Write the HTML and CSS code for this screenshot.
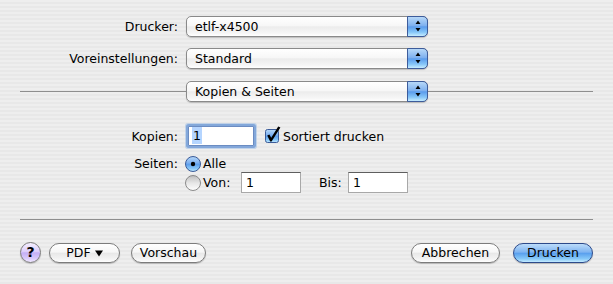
FILE: index.html
```html
<!DOCTYPE html>
<html>
<head>
<meta charset="utf-8">
<link rel="stylesheet" href="styles.css">
</head>
<body>
<svg width="0" height="0" class="defs">
  <defs>
    <linearGradient id="aqua" x1="0" y1="0" x2="0" y2="1">
      <stop offset="0" stop-color="#b7d8f8"/>
      <stop offset="0.45" stop-color="#79aef0"/>
      <stop offset="0.5" stop-color="#5a9cec"/>
      <stop offset="0.8" stop-color="#86c6f8"/>
      <stop offset="1" stop-color="#c6ecff"/>
    </linearGradient>
    <linearGradient id="grayr" x1="0" y1="0" x2="0" y2="1">
      <stop offset="0" stop-color="#bdbdbd"/>
      <stop offset="0.5" stop-color="#e6e6e6"/>
      <stop offset="1" stop-color="#ffffff"/>
    </linearGradient>
  </defs>
</svg>
<div class="dialog">
  <div class="row">
    <span class="lbl">Drucker:</span>
    <div class="popup"><span class="ptext">etlf-x4500</span><span class="parrows"><svg width="19" height="19" viewBox="0 0 19 19"><path d="M7.5 7 L12.5 7 L10 3.5 Z M7.5 11 L12.5 11 L10 14.5 Z" fill="#000"/></svg></span></div>
  </div>
  <div class="row">
    <span class="lbl">Voreinstellungen:</span>
    <div class="popup"><span class="ptext">Standard</span><span class="parrows"><svg width="19" height="19" viewBox="0 0 19 19"><path d="M7.5 7 L12.5 7 L10 3.5 Z M7.5 11 L12.5 11 L10 14.5 Z" fill="#000"/></svg></span></div>
  </div>
  <div class="seprow">
    <div class="popup"><span class="ptext">Kopien &amp; Seiten</span><span class="parrows"><svg width="19" height="19" viewBox="0 0 19 19"><path d="M7.5 7 L12.5 7 L10 3.5 Z M7.5 11 L12.5 11 L10 14.5 Z" fill="#000"/></svg></span></div>
  </div>

  <div class="pane">
    <div class="row kopien">
      <span class="lbl">Kopien:</span>
      <div class="field focus"><span class="sel">1</span></div>
      <svg class="check" width="18" height="18" viewBox="0 0 18 18">
        <rect x="0.5" y="3.5" width="13" height="13" rx="2" fill="url(#aqua)" stroke="#3b5b98"/>
        <path d="M2.2 9.6 L4.4 8.4 L6.2 11.8 L13.2 0.6 L15.4 1.4 L6.6 15.6 L5.2 15.6 Z" fill="#000"/>
      </svg>
      <span class="cbtext">Sortiert drucken</span>
    </div>
    <div class="row seiten">
      <span class="lbl">Seiten:</span>
      <div class="radios">
        <div class="ropt alle">
          <svg width="16" height="16" viewBox="0 0 16 16"><circle cx="8" cy="8" r="7.5" fill="url(#aqua)" stroke="#3b5b98"/><circle cx="8" cy="8" r="2.2" fill="#000"/></svg>
          <span class="rtext">Alle</span>
        </div>
        <div class="ropt von">
          <svg width="16" height="16" viewBox="0 0 16 16"><circle cx="8" cy="8" r="7.5" fill="url(#grayr)" stroke="#8a8a8a"/></svg>
          <span class="rtext vontext">Von:</span>
          <div class="field small">1</div>
          <span class="bistext">Bis:</span>
          <div class="field small">1</div>
        </div>
      </div>
    </div>
  </div>

  <div class="sep"></div>

  <div class="buttons">
    <div class="help">?</div>
    <div class="btn pdf">PDF <svg width="8" height="7" viewBox="0 0 8 7"><path d="M0 0.5 L8 0.5 L4 6.5 Z" fill="#000"/></svg></div>
    <div class="btn vorschau">Vorschau</div>
    <div class="spacer"></div>
    <div class="btn abbrechen">Abbrechen</div>
    <div class="btn default drucken">Drucken</div>
  </div>
</div>
</body>
</html>
```

FILE: styles.css
```css
* { box-sizing: border-box; }
html, body { margin: 0; padding: 0; }
body {
  width: 613px;
  height: 284px;
  overflow: hidden;
  font-family: "DejaVu Sans", sans-serif;
  font-size: 12.5px;
  color: #000;
  background: repeating-linear-gradient(to bottom, #eeeeee 0, #eeeeee 2px, #e8e8e8 2px, #e8e8e8 4px);
}
.defs { position: absolute; }

.dialog { padding-top: 16px; }

.row { display: flex; align-items: center; }
.row + .row { margin-top: 11px; }
.lbl { width: 178px; margin-right: 8px; text-align: right; flex: none; white-space: nowrap; }

.popup {
  width: 242px;
  height: 21px;
  display: flex;
  border: 1px solid #8a8a8a;
  border-radius: 5px;
  background: linear-gradient(#ffffff 0%, #f7f7f7 45%, #ececec 52%, #f6f6f6 85%, #ffffff 100%);
  box-shadow: 0 1px 1px rgba(0, 0, 0, 0.2);
  flex: none;
}
.ptext { flex: 1; padding-left: 8px; line-height: 19px; white-space: nowrap; }
.parrows {
  width: 21px;
  margin: -1px -1px -1px 0;
  border: 1px solid #3d5c9b;
  border-radius: 0 5px 5px 0;
  background: linear-gradient(#b7d8f8 0%, #7fb1ef 45%, #5b9cec 52%, #86c6f8 80%, #c6ecff 100%);
  display: flex;
}
.parrows svg { display: block; }

.seprow {
  margin: 12px 20px 0;
  height: 21px;
  display: flex;
  background: linear-gradient(#8e8e8e, #8e8e8e) no-repeat 0 10px / 100% 1px;
}
.seprow .popup { margin-left: 166px; }

.pane { margin-top: 24px; }

.field {
  background: #fff;
  border: 1px solid #a8a8a8;
  border-top-color: #5e5e5e;
  flex: none;
}
.kopien { height: 20px; }
.kopien .field {
  width: 66px;
  height: 20px;
  margin-left: 2px;
  padding-left: 3px;
  line-height: 18px;
}
.focus {
  border-color: #6b8cc2;
  box-shadow: 0 0 0 2px rgba(120, 160, 215, 0.85), 0 0 0 3px rgba(150, 185, 230, 0.5);
  border-radius: 1px;
}
.sel { background: #b5d5ff; padding: 1px 1px; }
.check { align-self: flex-start; margin-left: 11px; flex: none; display: block; }
.cbtext { margin-left: 0; white-space: nowrap; }

.row.seiten { margin-top: 9px; align-items: flex-start; }
.seiten .lbl { line-height: 17px; }
.radios { display: flex; flex-direction: column; margin-left: -1px; }
.ropt { display: flex; align-items: center; }
.ropt svg { display: block; flex: none; }
.alle { height: 17px; }
.von { height: 21px; }
.rtext { margin-left: 2px; }
.vontext { width: 38px; }
.field.small {
  width: 60px;
  height: 21px;
  padding-left: 4px;
  line-height: 19px;
}
.bistext { margin-left: 18px; width: 29px; }

.sep { height: 1px; background: #8e8e8e; margin: 26px 20px 0; }

.buttons {
  display: flex;
  align-items: center;
  margin-top: 22px;
  padding: 0 20px;
}
.spacer { flex: 1; }
.help {
  width: 21px;
  height: 21px;
  border-radius: 50%;
  border: 1px solid #7b7b7b;
  background: linear-gradient(#f6f0ff 0%, #dccdfb 45%, #c5aff5 52%, #d8c8fb 80%, #f1eaff 100%);
  box-shadow: 0 1px 1px rgba(0, 0, 0, 0.2);
  font-weight: bold;
  font-size: 14px;
  line-height: 19px;
  text-align: center;
  flex: none;
}
.btn {
  height: 20px;
  border: 1px solid #7c7c7c;
  border-radius: 10px;
  background: linear-gradient(#ffffff 0%, #f6f6f6 45%, #e8e8e8 52%, #f4f4f4 85%, #ffffff 100%);
  box-shadow: 0 1px 1px rgba(0, 0, 0, 0.22);
  line-height: 18px;
  text-align: center;
  white-space: nowrap;
  flex: none;
  display: flex;
  align-items: center;
  justify-content: center;
}
.pdf { width: 71px; margin-left: 8px; gap: 4px; }
.pdf svg { display: block; margin-top: 1px; }
.vorschau { width: 75px; margin-left: 11px; }
.abbrechen { width: 89px; }
.drucken { width: 80px; margin-left: 13px; }
.default {
  border-color: #2d4a8a;
  background: linear-gradient(#bcdcfa 0%, #7fb4f1 45%, #5aa0ee 52%, #86c8f8 82%, #c4ebff 100%);
}
```
